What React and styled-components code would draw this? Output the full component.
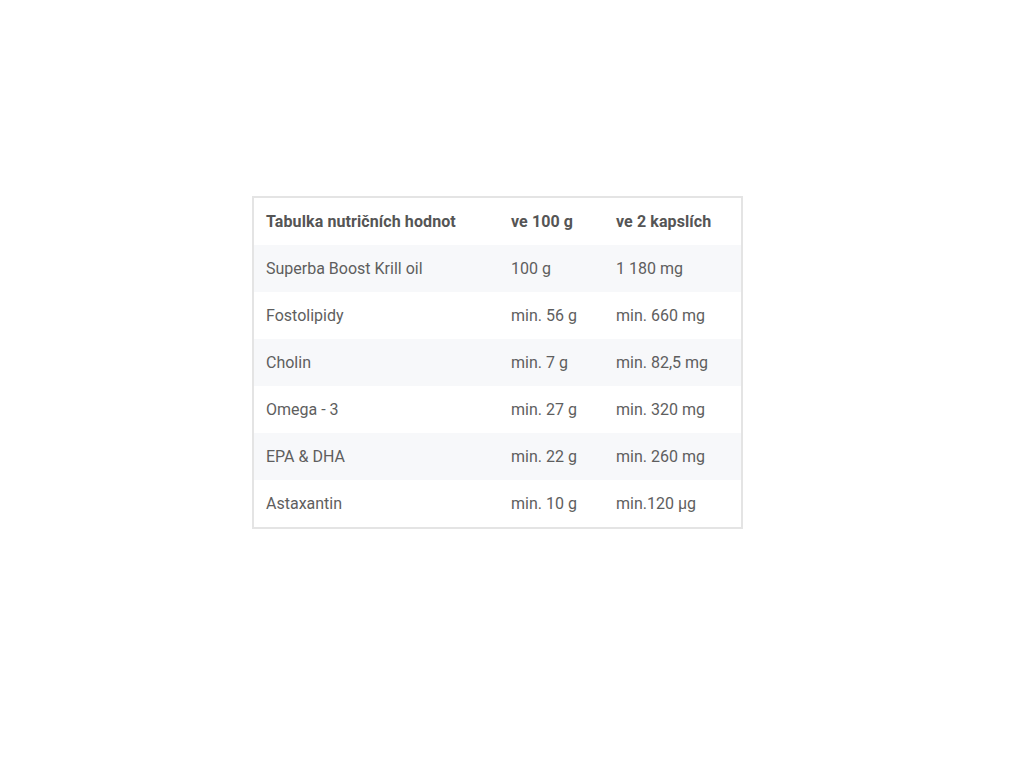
import React from "react";
import styled, { createGlobalStyle } from "styled-components";

const rows = [
  ["Superba Boost Krill oil", "100 g", "1 180 mg"],
  ["Fostolipidy", "min. 56 g", "min. 660 mg"],
  ["Cholin", "min. 7 g", "min. 82,5 mg"],
  ["Omega - 3", "min. 27 g", "min. 320 mg"],
  ["EPA & DHA", "min. 22 g", "min. 260 mg"],
  ["Astaxantin", "min. 10 g", "min.120 µg"],
];

const App = () => {
  return (
    <Page>
      <GlobalStyle />
      <Table>
        <colgroup>
          <col style={{ width: 245 }} />
          <col style={{ width: 105 }} />
          <col style={{ width: 137 }} />
        </colgroup>
        <thead>
          <Row>
            <Head>Tabulka nutričních hodnot</Head>
            <Head>ve 100 g</Head>
            <Head>ve 2 kapslích</Head>
          </Row>
        </thead>
        <tbody>
          {rows.map((r, i) => (
            <Row key={i} striped={i % 2 === 0}>
              {r.map((c, j) => (
                <Cell key={j}>{c}</Cell>
              ))}
            </Row>
          ))}
        </tbody>
      </Table>
    </Page>
  );
};

export default App;

const GlobalStyle = createGlobalStyle`
  body {
    margin: 0;
    background: #ffffff;
    font-family: Roboto, "Liberation Sans", sans-serif;
  }
`;
const Page = styled.div`
  padding: 196px 0 0 252px;
`;
const Table = styled.table`
  border: 2px solid #e4e4e4;
  border-collapse: separate;
  border-spacing: 0;
  width: 491px;
  table-layout: fixed;
  color: #5e5e5e;
  font-size: 16px;
`;
const Row = styled.tr.withConfig({
  shouldForwardProp: (p) => p !== "striped",
})`
  height: 47px;
  background: ${(p) => (p.striped ? "#f7f8fa" : "#ffffff")};
`;
const Head = styled.th`
  text-align: left;
  font-weight: 700;
  font-size: 16px;
  letter-spacing: 0.1px;
  padding: 0 12px;
  color: #555555;
`;
const Cell = styled.td`
  padding: 0 12px;
  white-space: nowrap;
`;
